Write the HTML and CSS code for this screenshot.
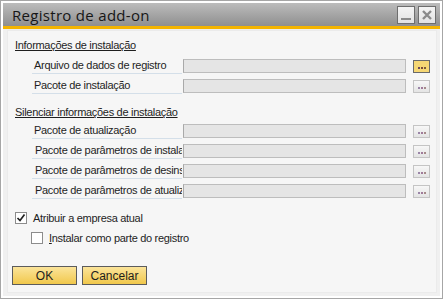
FILE: index.html
```html
<!DOCTYPE html>
<html lang="pt-br">
<head>
    <meta charset="UTF-8">
    <title>Registro de add-on</title>
    <link rel="stylesheet" href="styles.css">
</head>
<body>
    <div class="window">
        <div class="titlebar">
            <span class="title">Registro de add-on</span>
            <div class="controls">
                <span class="ctl ctl-min"></span>
                <span class="ctl ctl-close">
                    <svg width="12" height="12" viewBox="0 0 12 12"><path d="M2 2 L10 10 M10 2 L2 10" stroke="#8a8a8a" stroke-width="2.4"/></svg>
                </span>
            </div>
        </div>
        <div class="frame">
            <div class="panel">
                <div class="section-title first">Informações de instalação</div>
                <div class="row">
                    <span class="label">Arquivo de dados de registro</span>
                    <span class="field"></span>
                    <span class="browse active"></span>
                </div>
                <div class="row">
                    <span class="label">Pacote de instalação</span>
                    <span class="field"></span>
                    <span class="browse"></span>
                </div>

                <div class="section-title second">Silenciar informações de instalação</div>
                <div class="row">
                    <span class="label">Pacote de atualização</span>
                    <span class="field"></span>
                    <span class="browse"></span>
                </div>
                <div class="row">
                    <span class="label shift">Pacote de parâmetros de instalação</span>
                    <span class="field"></span>
                    <span class="browse"></span>
                </div>
                <div class="row">
                    <span class="label shift">Pacote de parâmetros de desinstalação</span>
                    <span class="field"></span>
                    <span class="browse"></span>
                </div>
                <div class="row">
                    <span class="label shift">Pacote de parâmetros de atualização</span>
                    <span class="field"></span>
                    <span class="browse"></span>
                </div>

                <label class="check">
                    <span class="box">
                        <svg width="10" height="10" viewBox="0 0 10 10"><path d="M1.5 5 L4 7.5 L8.5 1.5" fill="none" stroke="#222" stroke-width="1.7"/></svg>
                    </span>
                    Atribuir a empresa atual
                </label>
                <label class="check sub">
                    <span class="box"></span>
                    <span><u>I</u>nstalar como parte do registro</span>
                </label>

                <div class="actions">
                    <button class="btn">OK</button>
                    <button class="btn">Cancelar</button>
                </div>
            </div>
        </div>
    </div>
</body>
</html>
```

FILE: styles.css
```css
body {
    margin: 0;
    font-family: "Liberation Sans", Arial, sans-serif;
    font-size: 11px;
    letter-spacing: -0.3px;
    color: #1e1e1e;
    background: #fff;
}
.window {
    width: 443px;
    height: 299px;
    box-sizing: border-box;
    border: 1px solid #a6a6a6;
    padding: 2px;
    background: #fff;
    display: flex;
    flex-direction: column;
}
.titlebar {
    height: 23px;
    background: linear-gradient(#bcbcbc, #8f8f8f);
    border-bottom: 3px solid #f4b400;
    display: flex;
    align-items: center;
    justify-content: space-between;
    padding: 0 4px 0 9px;
}
.title {
    font-family: "Open Sans", sans-serif;
    font-size: 15px;
    letter-spacing: 0.3px;
    color: #161616;
    margin-top: 1px;
}
.controls {
    display: flex;
    gap: 3px;
}
.ctl {
    width: 16px;
    height: 16px;
    border: 1px solid #6e6e6e;
    background: linear-gradient(#f4f4f4, #e2e2e2);
    position: relative;
    display: flex;
    align-items: center;
    justify-content: center;
}
.ctl-min::after {
    content: "";
    position: absolute;
    left: 3px;
    right: 3px;
    bottom: 3px;
    height: 2px;
    background: #8a8a8a;
}
.frame {
    flex: 1;
    background: #f0f0f0;
    padding: 1px 4px 3px 4px;
    display: flex;
}
.panel {
    flex: 1;
    background: #f6f6f6;
    border: 1px solid #ebebeb;
    padding: 0 6px;
}
.section-title {
    text-decoration: underline;
    margin: 8px 0 7px 1px;
    line-height: 13px;
}
.section-title.second {
    margin: 13px 0 5px 1px;
}
.row {
    display: flex;
    align-items: center;
    height: 14px;
    margin-bottom: 6px;
    padding-left: 18px;
}
.label {
    width: 148px;
    padding-left: 2px;
    height: 14px;
    line-height: 13px;
    border-bottom: 1px solid #d4dfe9;
    white-space: nowrap;
    overflow: hidden;
}
.label.shift {
    padding-left: 3px;
    width: 147px;
}
.field {
    width: 221px;
    height: 12px;
    margin-left: 1px;
    background: #e5e5e5;
    border: 1px solid #bdbdbd;
    border-left-color: #a9a9a9;
}
.browse {
    width: 15px;
    height: 8px;
    margin-left: 7px;
    border: 1px solid #c4c4c4;
    background: linear-gradient(#f7f7f7, #e4e4e4);
    display: flex;
    align-items: flex-end;
    justify-content: center;
    padding-bottom: 3px;
}
.browse::before {
    content: "";
    width: 2px;
    height: 2px;
    background: #a07a9a;
    box-shadow: -3px 0 #9a86a8, 3px 0 #a68a8a;
}
.browse.active {
    border-color: #6a6a6a;
    background: #f6d774;
}
.browse.active::before {
    background: #7a4a3a;
    box-shadow: -3px 0 #6a4a5a, 3px 0 #7a5a3a;
}
.check {
    display: flex;
    align-items: center;
    gap: 6px;
    margin: 14px 0 0 1px;
    height: 12px;
    line-height: 12px;
}
.check.sub {
    margin: 8px 0 0 17px;
}
.box {
    width: 10px;
    height: 10px;
    border: 1px solid #8c8c8c;
    background: #fff;
    display: flex;
    align-items: center;
    justify-content: center;
}
.actions {
    display: flex;
    gap: 5px;
    margin: 22px 0 0 -2px;
}
.btn {
    width: 65px;
    height: 19px;
    padding: 0;
    font-family: "Liberation Sans", Arial, sans-serif;
    font-size: 12px;
    letter-spacing: 0;
    color: #1e1e1e;
    border: 1px solid #5c5c5c;
    background: linear-gradient(#fbe49a, #f1c84c);
}
```
